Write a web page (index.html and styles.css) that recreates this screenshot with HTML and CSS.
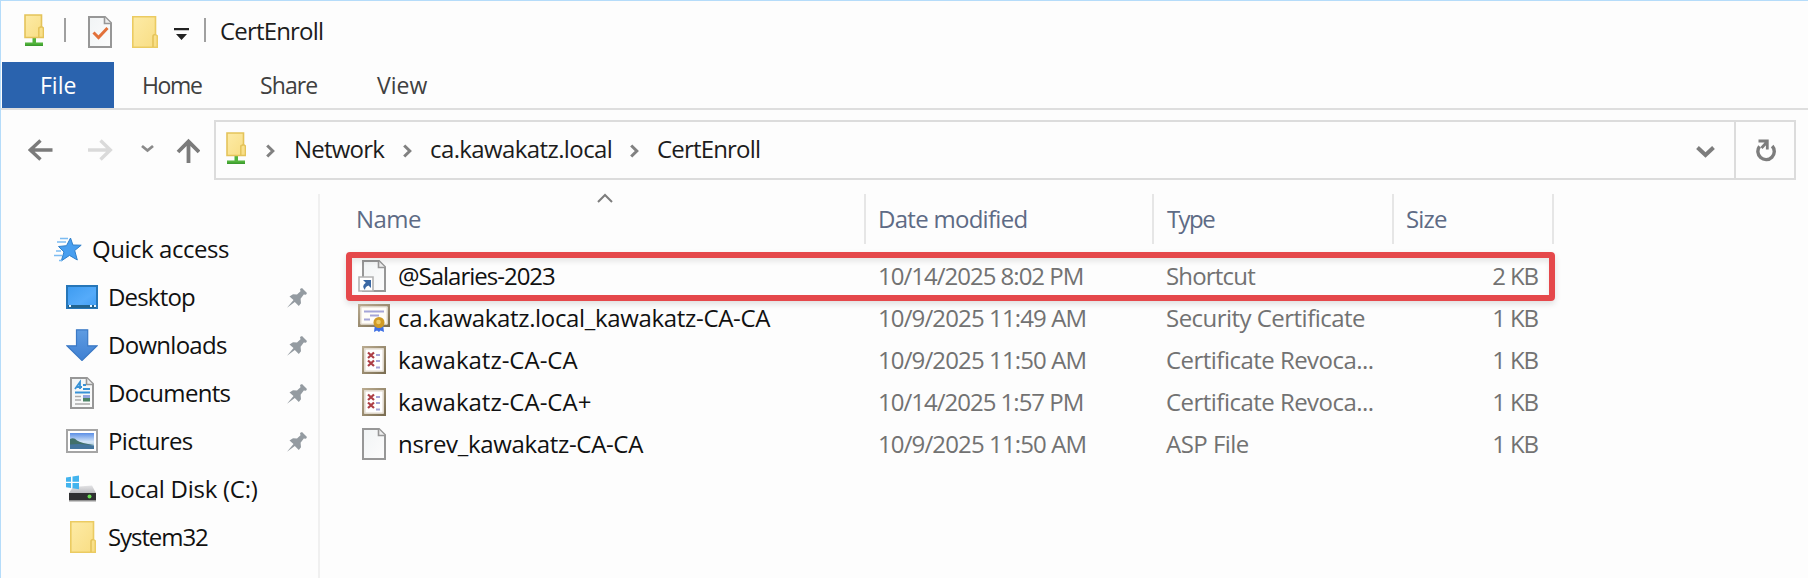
FILE: index.html
```
<!DOCTYPE html>
<html lang="en">
<head>
<meta charset="utf-8">
<title>CertEnroll</title>
<link rel="stylesheet" href="styles.css">
</head>
<body>
<svg class="defs" width="0" height="0">
  <defs>
    <linearGradient id="fold" x1="0" y1="0" x2="1" y2="1"><stop offset="0" stop-color="#fdeba6"/><stop offset="1" stop-color="#f8dd83"/></linearGradient>
    <linearGradient id="blue" x1="0" y1="0" x2="1" y2="1"><stop offset="0" stop-color="#3d9bf0"/><stop offset=".6" stop-color="#55abfa"/><stop offset="1" stop-color="#3f9cf3"/></linearGradient>
    <linearGradient id="arrow" x1="0" y1="0" x2="0" y2="1"><stop offset="0" stop-color="#5f9ce2"/><stop offset="1" stop-color="#3f80d2"/></linearGradient>
    <linearGradient id="paper" x1="0" y1="0" x2="1" y2="1"><stop offset="0" stop-color="#f1f4f5"/><stop offset="1" stop-color="#fcfcfc"/></linearGradient>
    <linearGradient id="sky" x1="0" y1="0" x2="0" y2="1"><stop offset="0" stop-color="#5b8fe6"/><stop offset=".55" stop-color="#d5e6f8"/><stop offset="1" stop-color="#8fb7d0"/></linearGradient>
    <linearGradient id="disk" x1="0" y1="0" x2="0" y2="1"><stop offset="0" stop-color="#e3e3e5"/><stop offset="1" stop-color="#bcbcc0"/></linearGradient>
    <linearGradient id="wood" x1="0" y1="0" x2="1" y2="1"><stop offset="0" stop-color="#b8a98e"/><stop offset="1" stop-color="#7b6e52"/></linearGradient>
    <symbol id="netfolder" viewBox="0 0 20 34">
      <path d="M8.500 24h3.500v4.500h7V32H1v-3.500h7.500z" fill="#52b43c"/><path d="M1 30.500h18V32H1z" fill="#3c9c2e"/>
      <path d="M1 1h16.500v11.500l2 1.500v9.500H1z" fill="url(#fold)" stroke="#e4c35a" stroke-width="1.600"/>
      <path d="M14.800 23.500V14l2.700-1.500" fill="none" stroke="#e4c35a" stroke-width="1.500"/>
    </symbol>
    <symbol id="folder" viewBox="0 0 26 32">
      <path d="M.8.8h22.700v17.700l1.800 1.500v11.200H.8z" fill="url(#fold)" stroke="#ebcb62" stroke-width="1.600"/>
      <path d="M21 31V20.500q0-2 2.500-2" fill="none" stroke="#e4c35a" stroke-width="1.600"/>
    </symbol>
    <symbol id="page" viewBox="0 0 24 32">
      <path d="M1 1h16l6 6v24H1z" fill="url(#paper)" stroke="#979797" stroke-width="2"/>
      <path d="M16.500 1v6.500H23" fill="#eee" stroke="#979797" stroke-width="1.600"/>
    </symbol>
    <symbol id="pin" viewBox="0 0 20 20">
      <path d="M0 19.800 6.500 12 2.500 8.500 6 6.200l4 .2L13.500 3.200 13 1 15 0l5 5-1 1.800-2.200-.4-3.200 4.300.4 4.600-2.200 2.600-4-4z" fill="#949ba1"/>
    </symbol>
    <symbol id="chev" viewBox="0 0 9 14"><path d="M1.200 1.500 6.800 7l-5.600 5.500" fill="none" stroke="#818181" stroke-width="3"/></symbol>
    <symbol id="crl" viewBox="0 0 24 28">
      <path d="M1 1h22v26H1z" fill="#f9f6ef" stroke="url(#wood)" stroke-width="2.400"/>
      <path d="M3 3h18v22H3z" fill="#fff" stroke="#ded5c8" stroke-width="1"/>
      <path d="m6 6.500 6 5.500m0-5.500-6 5.500m0 2.500 6 5.500m0-5.500-6 5.500" stroke="#ad3f46" stroke-width="2.200"/>
      <path d="M14 9h4m-4 6h4m-4 6.500h4" stroke="#a3a3d6" stroke-width="1.800"/>
    </symbol>
  </defs>
</svg>
<div class="window">
  <header class="titlebar">
    <svg class="net"><use href="#netfolder"/></svg>
    <i class="sep"></i>
    <svg class="page-icon" viewBox="0 0 24 32"><use href="#page"/><path d="m5.500 16.500 5 5 9-9.500" fill="none" stroke="#e2713a" stroke-width="3"/></svg>
    <svg class="folder-icon"><use href="#folder"/></svg>
    <svg class="more" width="15" height="12" viewBox="0 0 15 12"><path d="M0 0h15v2.200H0zM2 6h11l-5.500 6z" fill="#222"/></svg>
    <i class="sep second"></i>
    <span class="t8">CertEnroll</span>
  </header>
  <nav class="tabs">
    <span class="tab file">File</span><span class="tab home">Home</span><span class="tab share">Share</span><span class="tab view">View</span>
  </nav>
  <div class="navbar">
    <svg class="nav-arrows" width="172" height="26" viewBox="0 0 172 26" fill="none" stroke-width="3.400">
      <path d="M24.500 13H2M12.500 3.500 2.300 13l10.200 9.500" stroke="#7b7b7b"/>
      <path d="M60 13h22.500M72.500 3.500 82.300 13l-9.800 9.500" stroke="#dadada"/>
      <path d="m114 9 5.500 4.500L125 9" stroke="#8a8a8a" stroke-width="2.800"/>
      <path d="M160.500 26.500V4M150 15l10.500-10.500L171 15" stroke="#7b7b7b" stroke-width="3.800"/>
    </svg>
    <div class="address">
      <svg class="net"><use href="#netfolder"/></svg>
      <svg class="chev c1"><use href="#chev"/></svg>
      <span class="crumb network">Network</span>
      <svg class="chev"><use href="#chev"/></svg>
      <span class="crumb host">ca.kawakatz.local</span>
      <svg class="chev"><use href="#chev"/></svg>
      <span class="crumb t8">CertEnroll</span>
      <svg class="drop" width="19" height="12" viewBox="0 0 19 12"><path d="m1.500 1.500 8 7.500 8-7.500" fill="none" stroke="#7d7d7d" stroke-width="4"/></svg>
      <span class="refresh"><svg width="20" height="23" viewBox="0 0 20 23" fill="none" stroke="#7d7d7d" stroke-width="3.400"><path d="M3.600 7.400A8.200 8.200 0 1 0 16.200 7"/><path d="M2.500 2h8.800v8.500M10.500 3.500 5.500 9" stroke-width="2.800"/></svg></span>
    </div>
  </div>
  <main class="content">
    <aside class="sidebar">
      <div class="side quick"><svg width="29" height="25" viewBox="0 0 29 25"><path d="m17.500 1 2.400 7 8.300.2-6.500 5.300 2.600 9.500-7.800-4.600-8.200 5.500 2.700-9-5.500-5.400 8-.8z" fill="#489ff0" stroke="#2f7fc9"/><path d="M7 1.500h8M4 5h9M1 18.500h8M3 14h5M6 23.500h3" stroke="#7cbcf2" stroke-width="1.500"/></svg><span class="t4">Quick access</span></div>
      <div class="side"><svg width="32" height="24" viewBox="0 0 32 24"><path d="M1 1h30v22H1z" fill="url(#blue)" stroke="#2676b8" stroke-width="2"/><path d="M2 20h28v3H2z" fill="#22648f"/><path d="M3 21h2M24 21h2m2 0h2" stroke="#e8f5ff" stroke-width="2"/></svg><span class="t8">Desktop</span><svg class="pin"><use href="#pin"/></svg></div>
      <div class="side"><svg width="32" height="32" viewBox="0 0 32 32"><path d="M10.500.8h11.200v16h9.500L16 31.500.8 16.800h9.700z" fill="url(#arrow)" stroke="#3b79c5" stroke-width="1.200"/></svg><span class="t7">Downloads</span><svg class="pin"><use href="#pin"/></svg></div>
      <div class="side"><svg width="32" height="32" viewBox="-4 0 32 32"><use href="#page" width="24" height="32"/><path d="m5 12 5-7v7M7 10h5M13 8h3m-3 4h7M5 15.500h15" stroke="#3892d6" stroke-width="1.800" fill="none"/><path d="M5 19.500h6M5 23h6M5 27h15" stroke="#aaa" stroke-width="1.500"/><path d="M13 18h7v3h-7z" fill="#93a6e0"/><path d="M13 21h7v3.500h-7z" fill="#4c8466"/></svg><span class="t6">Documents</span><svg class="pin"><use href="#pin"/></svg></div>
      <div class="side"><svg width="32" height="24" viewBox="0 0 32 24"><path d="M1 1h30v22H1z" fill="#fff" stroke="#a5a5a5" stroke-width="2"/><path d="M4 4h24v16H4z" fill="url(#sky)"/><path d="M4 10q4-2 7 1.500 4 2.500 17 4.500H4z" fill="#41706a"/><path d="M4 15.500q12-1.500 24 1V20H4z" fill="#44759d"/></svg><span class="t6">Pictures</span><svg class="pin"><use href="#pin"/></svg></div>
      <div class="side"><svg width="32" height="28" viewBox="0 0 32 28"><path d="m7 12 19-1.500 4 7.500H3z" fill="url(#disk)"/><path d="M3 18h27v8H3z" fill="#303032"/><path d="M3 25h27v1.500H3z" fill="#929292"/><circle cx="23.500" cy="21.500" r="2" fill="#68df52"/><path d="m0 2.500 5-.8v5H0zm6.500-1L13 .5v6.200H6.500zM0 8h5v5l-5-.8zm6.500 0H13v6.200l-6.500-1z" fill="#43b4ee"/></svg><span class="t2">Local Disk (C:)</span></div>
      <div class="side"><svg width="32" height="32" viewBox="-4 0 32 32"><use href="#folder" width="26" height="32"/></svg><span class="t11">System32</span></div>
    </aside>
    <section class="files">
      <div class="head">
        <span class="col name t5">Name<svg class="sort" width="16" height="10" viewBox="0 0 16 10"><path d="m1 9 7-7 7 7" fill="none" stroke="#7d7d7d" stroke-width="2"/></svg></span>
        <span class="col date t7">Date modified</span><span class="col type t15">Type</span><span class="col size t8">Size</span>
      </div>
      <div class="rows">
        <div class="row marked"><span class="name"><svg width="32" height="32" viewBox="0 0 32 32"><use href="#page" x="4" width="24" height="32"/><path d="M1 17h14v14H1z" fill="#fff" stroke="#b2b2b2" stroke-width="1.600"/><path d="M5 20h8v8l-2.500-2.500q-3.500 1-3.500 4.500-4-4 .8-7.200z" fill="#3a68a4"/></svg><span class="t10">@Salaries-2023</span></span><span class="date t10">10/14/2025 8:02 PM</span><span class="type t8">Shortcut</span><span class="size">2 KB</span></div>
        <div class="row"><span class="name"><svg width="32" height="28" viewBox="0 0 32 28"><path d="M1.200 1.200h29.600v20.600H1.200z" fill="#fffdf8" stroke="url(#wood)" stroke-width="2.400"/><path d="M3 3h26v17H3z" fill="none" stroke="#e2d9cc"/><path d="M6 7.500h20M12 11.500h9M6 15.500h6" stroke="#a5a5d8" stroke-width="1.800"/><path d="m17 20-1 8 3-1.500L21 28l1.500-1.500L26 28l-1-8z" fill="#3e70e4"/><circle cx="21" cy="18.500" r="5.500" fill="#d09b26"/><circle cx="20.500" cy="18" r="2.300" fill="#edca66"/></svg><span class="t3">ca.kawakatz.local_kawakatz-CA-CA</span></span><span class="date t9">10/9/2025 11:49 AM</span><span class="type t5">Security Certificate</span><span class="size">1 KB</span></div>
        <div class="row"><span class="name"><svg width="32" height="28" viewBox="-4 0 32 28"><use href="#crl" width="24" height="28"/></svg><span>kawakatz-CA-CA</span></span><span class="date t9">10/9/2025 11:50 AM</span><span class="type t5">Certificate Revoca...</span><span class="size">1 KB</span></div>
        <div class="row"><span class="name"><svg width="32" height="28" viewBox="-4 0 32 28"><use href="#crl" width="24" height="28"/></svg><span>kawakatz-CA-CA+</span></span><span class="date t10">10/14/2025 1:57 PM</span><span class="type t5">Certificate Revoca...</span><span class="size">1 KB</span></div>
        <div class="row"><span class="name"><svg width="32" height="32" viewBox="-4 0 32 32"><use href="#page" width="24" height="32"/></svg><span class="t3">nsrev_kawakatz-CA-CA</span></span><span class="date t9">10/9/2025 11:50 AM</span><span class="type t5">ASP File</span><span class="size">1 KB</span></div>
      </div>
    </section>
  </main>
</div>
</body>
</html>
```

FILE: styles.css
```
* { box-sizing: border-box; }
body { margin: 0; background: #fdfdfd; color: #1c1c1c; font: 24px/32px "Open Sans", "Noto Sans", sans-serif; }
svg { display: block; flex: none; }
.defs { position: absolute; }
.window { height: 578px; overflow: hidden; border-top: 1px solid #b5dcfa; border-left: 1px solid #b5dcfa; display: flex; flex-direction: column; white-space: nowrap; }

.t2 { letter-spacing: -.26px; }
.t3 { letter-spacing: -.33px; }
.t4 { letter-spacing: -.46px; }
.t5 { letter-spacing: -.53px; }
.t6 { letter-spacing: -.68px; }
.t7 { letter-spacing: -.72px; }
.t8 { letter-spacing: -.82px; }
.t9 { letter-spacing: -.88px; }
.t10 { letter-spacing: -1px; }
.t11 { letter-spacing: -1.08px; }
.t15 { letter-spacing: -1.6px; }

.titlebar { height: 61px; display: flex; align-items: flex-start; padding: 13px 0 0 23px; }
.net { width: 20px; height: 34px; }
.sep { width: 2px; height: 24px; background: #a0a0a0; margin: 4px 0 0 20px; }
.page-icon { width: 24px; height: 32px; margin: 2px 0 0 22px; }
.folder-icon { width: 26px; height: 32px; margin: 2px 0 0 20px; }
.more { margin: 14px 0 0 16px; }
.second { margin-left: 15px; }
.titlebar span { margin: 1px 0 0 14px; }

.tabs { height: 48px; display: flex; border-bottom: 2px solid #dedede; font-size: 23px; color: #404040; padding-left: 1px; }
.tab { height: 46px; line-height: 46px; }
.file { width: 112px; padding-left: 38px; background: #2a63ae; color: #fff; }
.home { width: 119px; padding-left: 28px; letter-spacing: -1.4px; }
.share { width: 116px; padding-left: 27px; letter-spacing: -.9px; }
.view { padding-left: 28px; }

.navbar { height: 84px; padding: 10px 12px 0 27px; display: flex; align-items: flex-start; }
.nav-arrows { margin-top: 17px; }
.address { flex: 1; margin-left: 14px; height: 60px; border: 2px solid #dcdcdc; display: flex; align-items: center; padding-left: 10px; }
.address .net { margin-top: -3px; }
.chev { width: 9px; height: 14px; margin: 2px 18px 0 17px; }
.c1 { margin-left: 20px; margin-right: 19px; }
.crumb { margin-top: -2px; }
.network { width: 92px; letter-spacing: -.8px; }
.host { width: 183px; letter-spacing: -.6px; }
.drop { margin-left: auto; margin-right: 19px; margin-top: 4px; }
.refresh { width: 60px; height: 100%; border-left: 2px solid #dcdcdc; display: flex; align-items: center; justify-content: center; padding-left: 1px; }

.content { flex: 1; display: flex; }
.sidebar { width: 319px; border-right: 2px solid #f0f0f0; padding-top: 31px; }
.side { height: 48px; display: flex; align-items: center; padding: 0 11px 0 65px; color: #111; }
.side span { margin: -1px 0 0 10px; }
.quick { padding-left: 52px; }
.quick span { margin-left: 10px; }
.pin { width: 20px; height: 20px; margin-left: auto; margin-top: 2px; }

.head { display: flex; height: 50px; margin-left: 26px; color: #5e6b85; }
.col { height: 50px; line-height: 49px; border-right: 2px solid #e6e6e6; padding-left: 12px; position: relative; }
.head .name { width: 520px; padding-left: 10px; }
.head .date { width: 288px; }
.head .type { width: 240px; padding-left: 13px; }
.head .size { width: 160px; padding-left: 12px; }
.sort { position: absolute; left: 251px; top: -1px; }
.rows { margin-left: 26px; padding-top: 11px; }
.row { display: flex; height: 42px; align-items: center; position: relative; width: 1209px; color: #727272; }
.row .name { width: 520px; display: flex; align-items: center; padding-left: 12px; color: #111; }
.row .name span { margin-left: 8px; }
.row .date { width: 288px; padding-left: 12px; }
.row .type { width: 240px; padding-left: 12px; }
.row .size { flex: 1; text-align: right; padding-right: 17px; letter-spacing: -1.1px; }
.marked::after { content: ""; position: absolute; inset: -3px 0 -4px 0; border: 6px solid #e5484b; border-radius: 4px; box-shadow: 0 3px 6px rgba(0,0,0,.12), inset 0 4px 5px rgba(0,0,0,.08); }
```
